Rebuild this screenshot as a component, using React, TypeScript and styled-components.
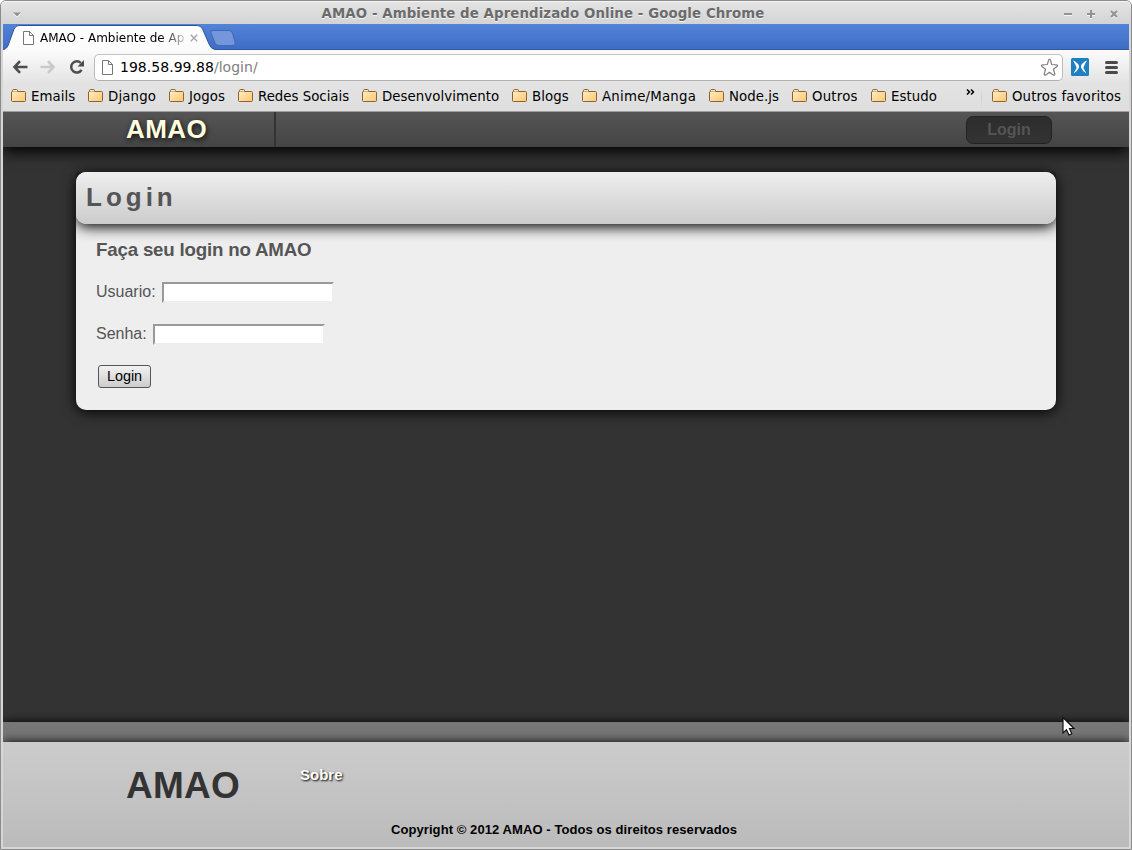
import React from "react";
import styled, { createGlobalStyle } from "styled-components";

const Global = createGlobalStyle`
  * { box-sizing: border-box; }
  body { margin: 0; background: #fff; overflow: hidden; }
  h1, h2, h3, p { margin: 0; }
`;

const ui = `"DejaVu Sans", sans-serif`;
const web = `"Liberation Sans", Arial, sans-serif`;

const Window = styled.div`
  position: relative;
  display: flex;
  flex-direction: column;
  width: 1132px;
  height: 850px;
  padding: 0 2px 2px;
  border: 1px solid #8b8b8b;
  border-radius: 6px 6px 0 0;
  background: #d6d6d6;
  font-family: ${ui};
  white-space: nowrap;
`;

const TitleBar = styled.header`
  display: flex;
  align-items: center;
  height: 23px;
  margin: 0 -2px;
  padding: 2px 11px 0 11px;
  border-top: 1px solid #f4f4f4;
  border-radius: 5px 5px 0 0;
  background: linear-gradient(#e4e4e4, #d3d3d3);
`;

const Title = styled.div`
  flex: 1;
  padding: 0 46px 2px 0;
  text-align: center;
  font-size: 13.33px;
  letter-spacing: 0.1px;
  font-weight: bold;
  color: #6b6b6b;
  text-shadow: 0 1px 0 #f5f5f5;
`;

const WindowButtons = styled.div`
  display: flex;
  gap: 11px;
  width: 58px;
`;

const TitleMenu = styled.div`
  display: flex;
  width: 58px;
  padding-top: 1px;
`;

const TabStrip = styled.div`
  display: flex;
  height: 26px;
  border-bottom: 1px solid #2f56a1;
  background: linear-gradient(#5283d7, #3f6dc6);
`;

const Tab = styled.div`
  position: relative;
  width: 206px;
  height: 26px;
  svg.shape { display: block; }
`;

const TabContent = styled.div`
  position: absolute;
  inset: 0;
  display: flex;
  align-items: center;
  padding: 2px 0 0 20px;
  font-size: 12px;
  color: #111;
`;

const TabTitle = styled.span`
  width: 145px;
  margin: 0 5px 0 6px;
  color: transparent;
  background: linear-gradient(90deg, #000 120px, #ccc 145px);
  -webkit-background-clip: text;
  background-clip: text;
`;

const Chrome = styled.div`
  height: 62px;
  border-bottom: 1px solid #9e9e9e;
  background: linear-gradient(#fbfbfb, #e3e3e3 34px, #dedede);
`;

const Toolbar = styled.div`
  display: flex;
  align-items: center;
  height: 34px;
  padding: 0 10px 0 9px;
`;

const Icon = styled.svg<{ $gap?: number }>`
  flex: none;
  margin-right: ${(p) => p.$gap ?? 0}px;
`;

const AddressBar = styled.div`
  display: flex;
  align-items: center;
  width: 969px;
  height: 27px;
  margin: 1px 8px 0 0;
  padding: 0 3px 0 7px;
  border: 1px solid #b9b9b9;
  border-color: #c3c3c3 #bababa #b0b0b0;
  border-radius: 5px;
  background: #fff;
  color: #000;
`;

const Url = styled.span`
  flex: 1;
  padding-bottom: 2px;
  font-size: 14px;
  letter-spacing: 0.03px;
  span { color: #808080; }
`;

const Bookmarks = styled.nav`
  display: flex;
  align-items: center;
  height: 27px;
  padding: 0 8px;
  font-size: 13.33px;
  letter-spacing: 0.06px;
  color: #000;
`;

const Bookmark = styled.a<{ $w: number; $tracking?: number }>`
  display: flex;
  align-items: center;
  width: ${(p) => p.$w}px;
  padding-bottom: 2px;
  letter-spacing: ${(p) => p.$tracking ?? 0.06}px;
  svg { margin: 0 4px 1px 0; }
`;

const More = styled.span`
  width: 11px;
  height: 24px;
  svg { display: block; margin-top: 3px; }
`;

const Separator = styled.span`
  width: 1px;
  height: 22px;
  margin: 0 10px 0 4px;
  background: linear-gradient(#e2e2e6, #c8cfe4, #e0e0e0);
`;

const Page = styled.div`
  display: flex;
  flex-direction: column;
  height: 735px;
  overflow: hidden;
  background: #333;
  font-family: ${web};
  color: #555;
`;

const NavBar = styled.div`
  display: flex;
  flex: none;
  height: 35px;
  padding-right: 77px;
  background: linear-gradient(#555, #444);
  box-shadow: 0 5px 15px #000;
`;

const Logo = styled.h1`
  width: 273px;
  padding-left: 123px;
  border-right: 2px solid #333;
  font-size: 26px;
  letter-spacing: 0.4px;
  line-height: 35px;
  color: #ffffdf;
  text-shadow: 1px 2px 5px #111;
`;

const NavButton = styled.a`
  width: 86px;
  height: 28px;
  margin: 4px 0 0 auto;
  border: 1px solid #222;
  border-radius: 7px;
  background: linear-gradient(#2d2d2d, #333);
  font-size: 16px;
  font-weight: bold;
  line-height: 26px;
  text-align: center;
  color: #555;
`;

const Main = styled.main`
  flex: 1;
  padding: 25px 73px 0;
`;

const Card = styled.section`
  height: 238px;
  border-radius: 10px;
  background: #eee;
  box-shadow: 0 2px 14px #000;
`;

const CardHeader = styled.h2`
  height: 52px;
  padding-left: 10px;
  border-radius: 10px;
  background: linear-gradient(#eee, #ccc);
  box-shadow: 0 3px 14px #000;
  clip-path: inset(0 0 -30px 0);
  font-size: 26px;
  line-height: 51px;
  letter-spacing: 4px;
`;

const Form = styled.form`
  display: flex;
  flex-direction: column;
  padding: 15px 20px 0;
  h3 {
    margin-bottom: 20px;
    font-size: 18.72px;
    line-height: 22px;
    letter-spacing: -0.19px;
  }
`;

const Field = styled.label`
  display: flex;
  align-items: flex-start;
  height: 42px;
  font-size: 16px;
  line-height: 21px;
`;

const Input = styled.input`
  width: 172px;
  height: 21px;
  margin: 1px 0 0 6px;
  padding: 0;
  border: 2px solid;
  border-color: #999 #eee #eee #999;
  background: #fff;
`;

const Submit = styled.button`
  width: 53px;
  height: 23px;
  margin: 0 0 0 2px;
  padding: 0 0 1px;
  border: 1px solid #555;
  border-radius: 3px;
  background: linear-gradient(#f2f2f2, #ccc);
  font: 14.4px/20px ${web};
  color: #000;
`;

const Strip = styled.div`
  flex: none;
  height: 20px;
  background: #777;
  box-shadow: 0 0 10px #000;
`;

const Footer = styled.footer`
  flex: none;
  height: 105px;
  background: linear-gradient(#ccc, #bbb);
  box-shadow: 0 0 10px #000;
`;

const FooterRow = styled.div`
  display: flex;
  height: 79px;
  padding: 22px 0 0 123px;
`;

const FooterLogo = styled.div`
  width: 174px;
  font-size: 37px;
  font-weight: bold;
  line-height: 43px;
  letter-spacing: 0.25px;
  color: #333;
`;

const FooterLink = styled.a`
  margin-top: 2px;
  font-size: 15px;
  font-weight: bold;
  line-height: 18px;
  color: #fff;
  text-shadow: 1px 1px 2px #000;
`;

const Copyright = styled.p`
  padding-right: 4px;
  font-size: 13px;
  font-weight: bold;
  line-height: 17px;
  letter-spacing: 0.08px;
  text-align: center;
  color: #000;
`;

const Pointer = styled.svg`
  position: absolute;
  left: 1061px;
  top: 715px;
`;

const FileIcon = ({ w, h, gap }: { w: number; h: number; gap?: number }) => (
  <Icon $gap={gap} width={w} height={h} viewBox={`0 0 ${w} ${h}`} fill="#fff" stroke="#777">
    <path d={`M.5 .5H${w - 4.5}L${w - 0.5} 4.5V${h - 0.5}H.5Z`} />
    <path d={`M${w - 4.5} .5V4.5H${w - 0.5}`} fill="none" />
  </Icon>
);

const Folder = () => (
  <svg width="16" height="14" viewBox="0 0 16 14">
    <defs>
      <linearGradient id="folder" x1="0" y1="0" x2="1" y2="1">
        <stop offset="0" stopColor="#fff0cf" />
        <stop offset="1" stopColor="#ffc76c" />
      </linearGradient>
    </defs>
    <path d="M1.500 2V1.500Q1.500 .5 2.500 .5H5.500Q6.500 .5 6.500 1.500V2.500H13.500Q14.500 2.500 14.500 3.500V11.500Q14.500 12.500 13.500 12.500H1.500Q.5 12.500 .5 11.500V3Q.5 2.500 1.500 2.500Z" fill="url(#folder)" stroke="#8c6239" />
    <path d="M2 2.500H6" stroke="#d9b27a" />
  </svg>
);

const bookmarks: [string, number, number?][] = [
  ["Emails", 77],
  ["Django", 81, 0.15],
  ["Jogos", 69],
  ["Redes Sociais", 124, 0],
  ["Desenvolvimento", 150],
  ["Blogs", 70],
  ["Anime/Manga", 127, 0.22],
  ["Node.js", 83],
  ["Outros", 79, 0.2],
  ["Estudo", 95],
];

const windowIcons = ["M2 6H10", "M2 6H10M6 2V10", "M3 3L9 9M9 3L3 9"];

export default function App() {
  return (
    <>
      <Global />
      <Window>
        <TitleBar>
          <TitleMenu>
            <svg width="10" height="6">
              <path d="M1 1.500H9L5 5.500Z" fill="#fff" />
              <path d="M1 .5H9L5 4.500Z" fill="#929292" />
            </svg>
          </TitleMenu>
          <Title>AMAO - Ambiente de Aprendizado Online - Google Chrome</Title>
          <WindowButtons>
            {windowIcons.map((d) => (
              <svg key={d} width="12" height="12" fill="none" strokeWidth="2">
                <path d={d} stroke="#f4f4f4" transform="translate(0 1)" />
                <path d={d} stroke="#929292" />
              </svg>
            ))}
          </WindowButtons>
        </TitleBar>

        <TabStrip>
          <Tab>
            <svg className="shape" width="214" height="26">
              <defs>
                <linearGradient id="tab" x1="0" y1="0" x2="0" y2="1">
                  <stop offset="0" stopColor="#fff" />
                  <stop offset="1" stopColor="#fbfbfb" />
                </linearGradient>
              </defs>
              <path
                d="M0 25.500C4 25 5 22 6 19L11 5Q12.500 1.500 16 1.500H194Q198 1.500 199.500 5L206 20Q208 25 212 25.500V26H0Z"
                fill="url(#tab)"
              />
              <path
                d="M0 25.500C4 25 5 22 6 19L11 5Q12.500 1.500 16 1.500H194Q198 1.500 199.500 5L206 20Q208 25 212 25.500"
                fill="none"
                stroke="#2f56a1"
              />
            </svg>
            <TabContent>
              <FileIcon w={11} h={14} />
              <TabTitle>AMAO - Ambiente de Ap</TabTitle>
              <svg width="8" height="8" stroke="#aaa" strokeWidth="1.500">
                <path d="M.8 .8L7.200 7.200M7.200 .8L.8 7.200" />
              </svg>
            </TabContent>
          </Tab>
          <svg width="28" height="26">
            <path d="M4 6.500H20Q22.500 6.500 23.500 9L26 18Q27 21.500 24 21.500H10Q7 21.500 6 19L2 9Q1 6.500 4 6.500Z" fill="#7397da" stroke="#4168b4" />
          </svg>
        </TabStrip>

        <Chrome>
          <Toolbar>
            <Icon $gap={12} width="16" height="16" viewBox="0 0 16 16" fill="none" stroke="#4d4d4d" strokeWidth="2.600">
              <path d="M8 2.200L2.500 8L8 13.800M3 8H15.500" />
            </Icon>
            <Icon $gap={13} width="16" height="16" viewBox="0 0 16 16" fill="none" stroke="#c9c9c9" strokeWidth="2.600">
              <path d="M8 2.200L13.500 8L8 13.800M13 8H.5" />
            </Icon>
            <Icon $gap={9} width="16" height="16" viewBox="0 0 16 16" fill="none" stroke="#4d4d4d" strokeWidth="2.500">
              <path d="M11.800 4A5.600 5.600 0 1 0 12.600 10.800" />
              <path d="M15 1V7.500H8.500Z" fill="#4d4d4d" stroke="none" />
            </Icon>
            <AddressBar>
              <FileIcon w={11} h={15} gap={7} />
              <Url>
                198.58.99.88<span>/login/</span>
              </Url>
              <svg width="19" height="19" viewBox="0 0 19 19" fill="#fff" stroke="#808080" strokeWidth="1.200" strokeLinejoin="round">
                <path d="M9.500 1.200Q10.200 1.200 10.500 2.500L11.700 6.500L16.500 6.800Q18.500 7.300 17 8.600L13.400 11.300L14.800 15.800Q14.900 17.800 13.200 16.900L9.500 14.200L5.800 16.900Q4.100 17.800 4.200 15.800L5.600 11.300L2 8.600Q.5 7.300 2.500 6.800L7.300 6.500L8.500 2.500Q8.800 1.200 9.500 1.200Z" />
              </svg>
            </AddressBar>
            <Icon $gap={16} width="18" height="18" viewBox="0 0 18 18">
              <rect width="18" height="18" rx="1.500" fill="#1e7fc2" />
              <path d="M2 2.500Q7 4.500 8 8V9.500Q7 12.500 2.500 15.500Q5 11.500 5.600 9.500Q4.500 6.500 2 2.500ZM16 2.500Q11 4.500 10 8V9.500Q11 12.500 15.500 15.500Q13 11.500 12.400 9.500Q13.500 6.500 16 2.500Z" fill="#fff" />
            </Icon>
            <Icon width="13" height="13" stroke="#4a4a4a" strokeWidth="3" strokeLinecap="round">
              <path d="M1.500 1.500H11.500M1.500 6.500H11.500M1.500 11.500H11.500" />
            </Icon>
          </Toolbar>
          <Bookmarks>
            {bookmarks.map(([label, width, tracking]) => (
              <Bookmark key={label} $w={width} $tracking={tracking}>
                <Folder />
                {label}
              </Bookmark>
            ))}
            <More>
              <svg width="9" height="6" fill="none" stroke="#000" strokeWidth="1.500">
                <path d="M1 .5L3.500 3L1 5.500M5 .5L7.500 3L5 5.500" />
              </svg>
            </More>
            <Separator />
            <Bookmark $w={129} $tracking={0.12}>
              <Folder />
              Outros favoritos
            </Bookmark>
          </Bookmarks>
        </Chrome>

        <Page>
          <NavBar>
            <Logo>AMAO</Logo>
            <NavButton>Login</NavButton>
          </NavBar>
          <Main>
            <Card>
              <CardHeader>Login</CardHeader>
              <Form>
                <h3>Faça seu login no AMAO</h3>
                <Field>
                  Usuario: <Input type="text" />
                </Field>
                <Field>
                  Senha: <Input type="password" />
                </Field>
                <Submit type="button">Login</Submit>
              </Form>
            </Card>
          </Main>
          <Strip />
          <Footer>
            <FooterRow>
              <FooterLogo>AMAO</FooterLogo>
              <FooterLink>Sobre</FooterLink>
            </FooterRow>
            <Copyright>Copyright © 2012 AMAO - Todos os direitos reservados</Copyright>
          </Footer>
        </Page>

        <Pointer width="14" height="21" viewBox="0 0 14 21">
          <path d="M1 1.500V17L4.500 13.800L7 19L9.800 17.700L7.500 12.500H12Z" fill="#fff" stroke="#111" strokeWidth="1.200" />
        </Pointer>
      </Window>
    </>
  );
}
